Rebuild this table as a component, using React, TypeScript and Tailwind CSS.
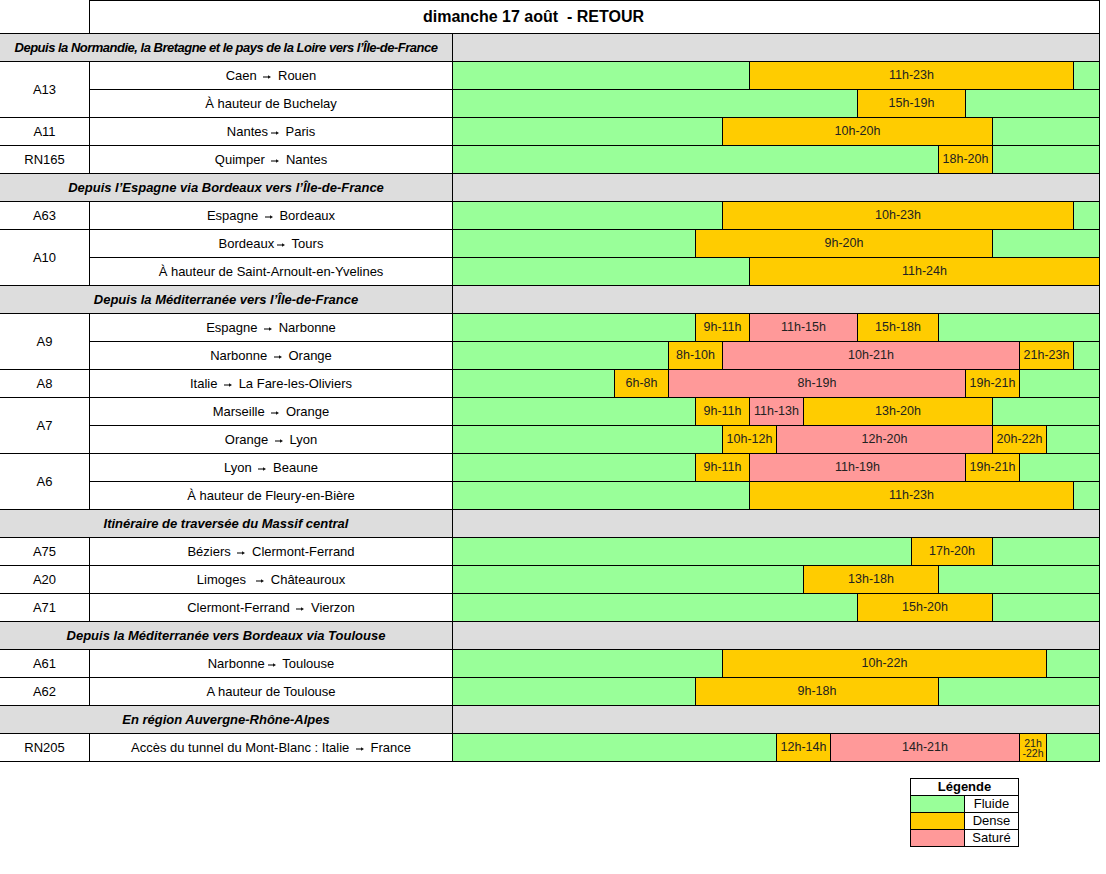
import React from 'react';

type Level = 'G' | 'O' | 'R';

interface Segment {
  from: number;
  to: number;
  level: Level;
  label?: string;
}

interface Route {
  name: string;
  segments: Segment[];
}

interface RoadGroup {
  road: string;
  routes: Route[];
}

interface Section {
  title: string;
  tight?: boolean;
  groups: RoadGroup[];
}

// Build a full 0-24h bar, filling gaps with "fluide"
const bar = (...busy: [number, number, Level][]): Segment[] => {
  const out: Segment[] = [];
  let t = 0;
  busy.forEach(([a, b, level]) => {
    if (a > t) out.push({ from: t, to: a, level: 'G' });
    out.push({ from: a, to: b, level, label: `${a}h-${b}h` });
    t = b;
  });
  if (t < 24) out.push({ from: t, to: 24, level: 'G' });
  return out;
};

const sections: Section[] = [
  {
    title: 'Depuis la Normandie, la Bretagne et le pays de la Loire vers l’Île-de-France',
    tight: true,
    groups: [
      {
        road: 'A13',
        routes: [
          { name: 'Caen → Rouen', segments: bar([11, 23, 'O']) },
          { name: 'À hauteur de Buchelay', segments: bar([15, 19, 'O']) },
        ],
      },
      { road: 'A11', routes: [{ name: 'Nantes→ Paris', segments: bar([10, 20, 'O']) }] },
      { road: 'RN165', routes: [{ name: 'Quimper → Nantes', segments: bar([18, 20, 'O']) }] },
    ],
  },
  {
    title: 'Depuis l’Espagne via Bordeaux vers l’Île-de-France',
    groups: [
      { road: 'A63', routes: [{ name: 'Espagne → Bordeaux', segments: bar([10, 23, 'O']) }] },
      {
        road: 'A10',
        routes: [
          { name: 'Bordeaux→ Tours', segments: bar([9, 20, 'O']) },
          { name: 'À hauteur de Saint-Arnoult-en-Yvelines', segments: bar([11, 24, 'O']) },
        ],
      },
    ],
  },
  {
    title: 'Depuis la Méditerranée vers l’Île-de-France',
    groups: [
      {
        road: 'A9',
        routes: [
          { name: 'Espagne → Narbonne', segments: bar([9, 11, 'O'], [11, 15, 'R'], [15, 18, 'O']) },
          { name: 'Narbonne → Orange', segments: bar([8, 10, 'O'], [10, 21, 'R'], [21, 23, 'O']) },
        ],
      },
      {
        road: 'A8',
        routes: [
          { name: 'Italie → La Fare-les-Oliviers', segments: bar([6, 8, 'O'], [8, 19, 'R'], [19, 21, 'O']) },
        ],
      },
      {
        road: 'A7',
        routes: [
          { name: 'Marseille → Orange', segments: bar([9, 11, 'O'], [11, 13, 'R'], [13, 20, 'O']) },
          { name: 'Orange → Lyon', segments: bar([10, 12, 'O'], [12, 20, 'R'], [20, 22, 'O']) },
        ],
      },
      {
        road: 'A6',
        routes: [
          { name: 'Lyon → Beaune', segments: bar([9, 11, 'O'], [11, 19, 'R'], [19, 21, 'O']) },
          { name: 'À hauteur de Fleury-en-Bière', segments: bar([11, 23, 'O']) },
        ],
      },
    ],
  },
  {
    title: 'Itinéraire de traversée du Massif central',
    groups: [
      { road: 'A75', routes: [{ name: 'Béziers → Clermont-Ferrand', segments: bar([17, 20, 'O']) }] },
      { road: 'A20', routes: [{ name: 'Limoges  → Châteauroux', segments: bar([13, 18, 'O']) }] },
      { road: 'A71', routes: [{ name: 'Clermont-Ferrand → Vierzon', segments: bar([15, 20, 'O']) }] },
    ],
  },
  {
    title: 'Depuis la Méditerranée vers Bordeaux via Toulouse',
    groups: [
      { road: 'A61', routes: [{ name: 'Narbonne→ Toulouse', segments: bar([10, 22, 'O']) }] },
      { road: 'A62', routes: [{ name: 'A hauteur de Toulouse', segments: bar([9, 18, 'O']) }] },
    ],
  },
  {
    title: 'En région Auvergne-Rhône-Alpes',
    groups: [
      {
        road: 'RN205',
        routes: [
          {
            name: 'Accès du tunnel du Mont-Blanc : Italie → France',
            segments: bar([12, 14, 'O'], [14, 21, 'R'], [21, 22, 'O']),
          },
        ],
      },
    ],
  },
];

const levelBg: Record<Level, string> = {
  G: 'bg-[#99ff99]',
  O: 'bg-[#ffcc00]',
  R: 'bg-[#ff9999]',
};

const HOUR = 27;

// Small low arrow, as in the spreadsheet export
const Arrow = () => (
  <svg width="8" height="4" viewBox="0 0 8 4" className="inline-block mx-[3px] align-[1px]">
    <path d="M0 2h5.5" stroke="#111" strokeWidth="1.1" />
    <path d="M5 0.2L8 2L5 3.8Z" fill="#111" />
  </svg>
);

// Route label with the small arrow glyph
const RouteName: React.FC<{ name: string }> = ({ name }) => {
  const parts = name.split('→');
  return (
    <span className="whitespace-pre">
      {parts.map((p, i) => (
        <React.Fragment key={i}>
          {p}
          {i < parts.length - 1 && <Arrow />}
        </React.Fragment>
      ))}
    </span>
  );
};

const TimeBar: React.FC<{ segments: Segment[] }> = ({ segments }) => (
  <div className="flex w-[648px] border-l border-r border-black overflow-hidden">
    {segments.map((s, i) => {
      const isLast = i === segments.length - 1;
      const width = (s.to - s.from) * HOUR - (s.from === 0 ? 1 : 0);
      const narrow = s.to - s.from < 2;
      return (
        <div
          key={i}
          className={`flex items-center justify-center text-center text-[#222] shrink-0 ${levelBg[s.level]} ${
            s.from > 0 ? 'border-l border-black' : ''
          } ${isLast ? 'flex-1' : ''} ${narrow ? 'text-[10.5px] leading-[10px]' : 'text-[12.5px] leading-none'}`}
          style={isLast ? undefined : { width }}
        >
          {s.label && (narrow ? <span className="px-[2px]">{s.label.replace('-', '\u200b-')}</span> : s.label)}
        </div>
      );
    })}
  </div>
);

export default function App() {
  return (
    <div className="w-[1106px] h-[874px] bg-white text-black font-['Liberation_Sans',Arial,sans-serif]">
      <div className="w-[1100px]">
        {/* Title */}
        <div className="flex h-[33px]">
          <div className="w-[89px]" />
          <div className="w-[1011px] border-t border-l border-r border-black flex items-center justify-center pr-[122px] text-[16px] font-bold">
            dimanche 17 août&nbsp; - RETOUR
          </div>
        </div>

        {sections.map((sec, si) => (
          <div key={si}>
            <div className="flex h-[28px] border-t border-black bg-[#dddddd]">
              <div
                className={`w-[452px] flex items-center justify-center text-[13px] font-bold italic whitespace-nowrap ${
                  sec.tight ? 'tracking-[-0.5px]' : ''
                }`}
              >
                {sec.title}
              </div>
              <div className="w-[648px] border-l border-r border-black" />
            </div>
            {sec.groups.map((g, gi) => (
              <div key={gi} className="flex">
                <div className="w-[89px] border-t border-black flex items-center justify-center text-[13px]">
                  {g.road}
                </div>
                <div className="flex flex-col">
                  {g.routes.map((r, ri) => (
                    <div key={ri} className="flex h-[28px] border-t border-black">
                      <div className="w-[363px] border-l border-black flex items-center justify-center text-[13px]">
                        <RouteName name={r.name} />
                      </div>
                      <TimeBar segments={r.segments} />
                    </div>
                  ))}
                </div>
              </div>
            ))}
          </div>
        ))}
        <div className="border-t border-black" />
      </div>

      {/* Legend */}
      <div className="ml-[910px] mt-[16px] w-[109px] border-l border-r border-b border-black text-[13px]">
        <div className="h-[17px] border-t border-black flex items-center justify-center font-bold">Légende</div>
        {([
          ['G', 'Fluide'],
          ['O', 'Dense'],
          ['R', 'Saturé'],
        ] as [Level, string][]).map(([lvl, label]) => (
          <div key={lvl} className="flex h-[17px] border-t border-black">
            <div className={`w-[53px] ${levelBg[lvl]}`} />
            <div className="flex-1 border-l border-black flex items-center justify-center">{label}</div>
          </div>
        ))}
      </div>
    </div>
  );
}
